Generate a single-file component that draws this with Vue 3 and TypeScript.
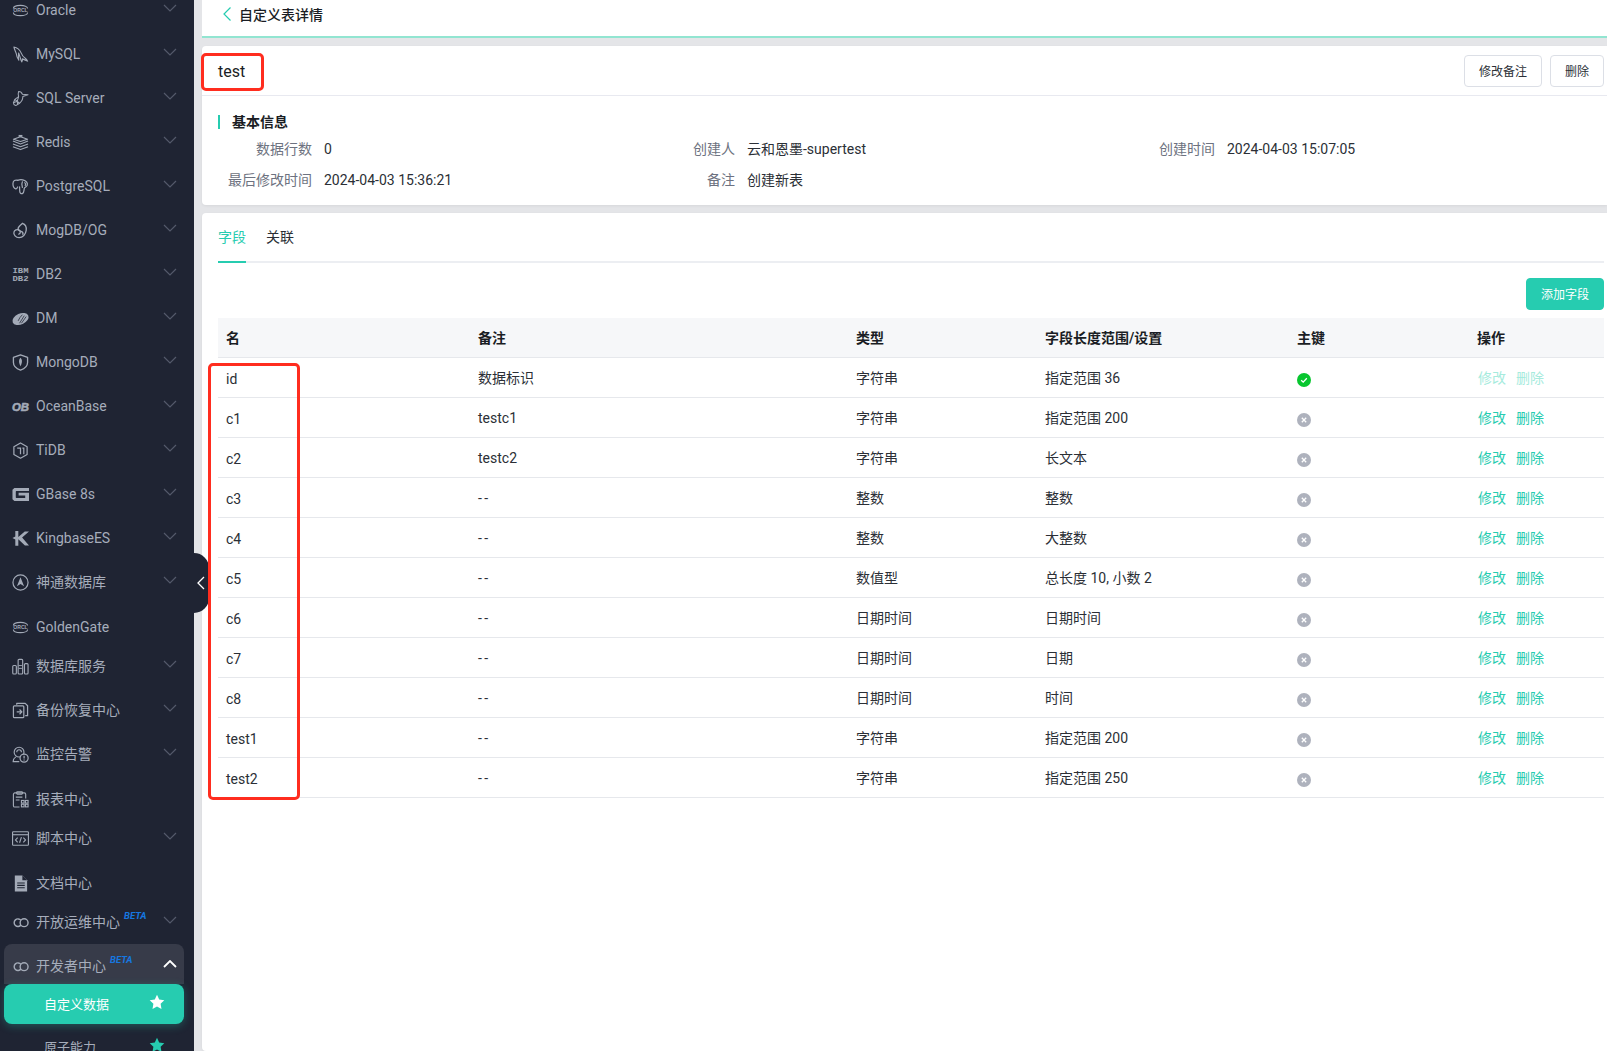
<template>
  <div class="shell">
    <aside class="sidebar">
      <ul class="menu">
        <li
          v-for="item in menu"
          :key="item.name"
          class="menu-item"
          :class="{ plain: !item.arrow, open: item.open }"
        >
          <svg class="menu-icon" viewBox="0 0 18 18" v-html="icons[item.icon]"></svg>
          <span class="menu-name">{{ item.name }}</span>
          <sup v-if="item.beta" class="beta">BETA</sup>
          <svg v-if="item.arrow" class="chevron" viewBox="0 0 14 8">
            <path :d="item.open ? 'M1 7l6-6 6 6' : 'M1 1l6 6 6-6'" />
          </svg>
        </li>
        <li class="sub-item active">
          <span>自定义数据</span>
          <svg class="star" viewBox="0 0 16 16"><path :d="starPath" /></svg>
        </li>
        <li class="sub-item">
          <span>原子能力</span>
          <svg class="star" viewBox="0 0 16 16"><path :d="starPath" /></svg>
        </li>
      </ul>
    </aside>

    <button class="collapse">
      <svg viewBox="0 0 10 16"><path d="M8 2L2 8l6 6" /></svg>
    </button>

    <main class="main">
      <header class="topbar">
        <svg class="back" viewBox="0 0 10 16"><path d="M8.500 1.500L2 8l6.500 6.500" /></svg>
        <span>自定义表详情</span>
      </header>

      <section class="card info-card">
        <div class="card-head">
          <h1>test</h1>
          <div class="head-actions">
            <button class="btn wide">修改备注</button>
            <button class="btn">删除</button>
          </div>
        </div>
        <div class="info-body">
          <h2>基本信息</h2>
          <div class="info-grid">
            <template v-for="f in infoFields" :key="f.label">
              <span class="info-label">{{ f.label }}</span>
              <span class="info-value">{{ f.value }}</span>
            </template>
          </div>
        </div>
      </section>

      <section class="card table-card">
        <div class="tabs">
          <span class="tab active">字段</span>
          <span class="tab">关联</span>
        </div>
        <div class="toolbar">
          <button class="btn primary">添加字段</button>
        </div>
        <table class="fields">
          <colgroup>
            <col class="c-name" /><col class="c-note" /><col class="c-type" />
            <col class="c-len" /><col class="c-key" /><col class="c-op" />
          </colgroup>
          <thead>
            <tr>
              <th>名</th><th>备注</th><th>类型</th><th>字段长度范围/设置</th><th>主键</th><th>操作</th>
            </tr>
          </thead>
          <tbody>
            <tr v-for="row in rows" :key="row.name">
              <td class="name-cell">{{ row.name }}</td>
              <td :class="{ latin: !row.key, empty: row.note === '--' }">{{ row.note }}</td>
              <td>{{ row.type }}</td>
              <td>{{ row.len }}</td>
              <td>
                <svg class="key-icon" viewBox="0 0 14 14">
                  <circle cx="7" cy="7" r="7" :fill="row.key ? '#07c62f' : '#aeb2bd'" />
                  <path v-if="row.key" d="M4.200 7.200l2 1.900 3.600-3.800" />
                  <path v-else d="M4.800 4.800l4.400 4.400M9.200 4.800L4.800 9.200" />
                </svg>
              </td>
              <td>
                <span class="ops" :class="{ disabled: row.key }"><a>修改</a><a>删除</a></span>
              </td>
            </tr>
          </tbody>
        </table>
      </section>

      <div class="mark mark-title"></div>
      <div class="mark mark-names"></div>
    </main>
  </div>
</template>

<script setup lang="ts">
interface MenuItem { name: string; icon: string; arrow?: boolean; beta?: boolean; open?: boolean }
interface FieldRow { name: string; note: string; type: string; len: string; key?: boolean }

const starPath = 'M8 .8l2.200 4.700 5.100.7-3.700 3.600.9 5.100L8 12.400l-4.500 2.500.9-5.100L.7 6.200l5.100-.7z'

const oracleIcon = `<g fill="none" stroke="currentColor" stroke-width="1.200"><path d="M1.500 7c0-4.500 15-4.500 15 0"/><path d="M1.500 11c0 4.500 15 4.500 15 0"/></g><text x="9" y="11" text-anchor="middle" font-size="5.400" font-weight="700" font-family="Liberation Sans, sans-serif" fill="currentColor">ORCL</text>`
const infinityIcon = `<g fill="none" stroke="currentColor" stroke-width="1.500"><path d="M9.500 6.800a4 4 0 1 0 0 4.800"/><circle cx="12.800" cy="9.200" r="4.200"/></g>`

const icons: Record<string, string> = {
  oracle: oracleIcon,
  mysql: `<g fill="none" stroke="currentColor" stroke-width="1.200" stroke-linejoin="round" stroke-linecap="round"><path d="M2 1c3 .5 6 2.500 7.500 6 1 2.500 2 4.500 4.500 6 1 .7 2 1.800 2.500 3-2-1-4-1.500-5.500-2.500.2 1 0 2-.7 3.300-.8-1.800-1.300-3.300-1.800-5.300-.5-1.500-1-3-1.500-4-.2 2.500-.2 5 .2 7.500-1.700-2-2.400-4.500-2.700-7C4 6 2.500 4 2 1z"/></g>`,
  sqlserver: `<g fill="none" stroke="currentColor" stroke-width="1.100" stroke-linejoin="round"><path d="M7 1.500c2 0 3.500 1.500 4 3l6 .5-5.500 2c0 3-1.500 5.500-3.500 7l-4 2.500c-1.500-.5-2.500-1.500-2.500-3L3 10l4-3c-.5-2 -.5-4 0-5.500z"/><path d="M3 10l5 4M7 7l-1.500 5-4 1.500M5.500 12l.5 3.500"/></g>`,
  redis: `<g fill="none" stroke="currentColor" stroke-width="1.200" stroke-linejoin="round"><path d="M1 7.500L9 10.500l8-3"/><path d="M1 10.500L9 13.500l8-3"/><path d="M1 13.500L9 16.500l8-3"/><path d="M1.500 5.500L9 3l7.500 2.500L9 8z"/></g><rect x="7" y="1" width="4" height="2" fill="currentColor"/>`,
  postgres: `<g fill="none" stroke="currentColor" stroke-width="1.300" stroke-linecap="round" stroke-linejoin="round"><path d="M6 2.500C3.500 1.500 1 3 1 6c0 2.500 1.500 5 3 5.500 1 .3 1.500-1 2-2"/><path d="M6 2.500c2-1 5-1 7 0 2.200.8 4 3 3 5.500-.8 1.500-2.500 1.500-3 3-.5 2 0 4.500-2 5.500-1.500.5-2.700-.5-2.800-2.500L8 9.500"/><path d="M11 4c-1 2-1 3.500 0 6"/><path d="M13.500 5c1 .5 1 2 .5 3"/></g>`,
  mogdb: `<g fill="none" stroke="currentColor" stroke-width="1.400" stroke-linecap="round"><path d="M11 1.500c3 1 4.500 4 4 7.500-.5 4-3.500 7.500-7.500 7.500C4 16.500 1.500 13.500 2 11c.4-2.500 3.500-3.500 5.500-2.500 2 1.200 1.500 4-.3 4.300"/><path d="M11 1.500C9 3 7 4.500 6.500 6.500c-.3 1.500 1 2.800 3 3.500 1.500.5 2.500 1.500 2 3"/></g>`,
  db2: `<g font-family="Liberation Mono, monospace" font-weight="700" fill="currentColor" text-anchor="middle"><text x="9" y="7.500" font-size="7" textLength="17" lengthAdjust="spacingAndGlyphs">IBM</text><text x="9" y="15.500" font-size="8" textLength="17" lengthAdjust="spacingAndGlyphs">DB2</text></g>`,
  dm: `<ellipse cx="9" cy="9.500" rx="9" ry="5.800" transform="rotate(-24 9 9.500)" fill="currentColor"/><g fill="none" stroke="#1f2433" stroke-width=".8"><path d="M8 14l5-8M10 14l5-7M6.500 11.500c1-2.500 2.500-4.500 4.500-6.500"/></g>`,
  mongodb: `<path d="M9 1l7.500 2.700v5.300c0 3.500-3.200 6.500-7.500 8-4.300-1.500-7.500-4.500-7.500-8V3.700z" fill="none" stroke="currentColor" stroke-width="1.400" stroke-linejoin="round"/><path d="M9 4c1.800 1.800 2.300 4.500 0 9-2.300-4.500-1.800-7.200 0-9z" fill="currentColor"/>`,
  oceanbase: `<text x="9" y="13.500" text-anchor="middle" font-size="12" font-weight="700" font-style="italic" font-family="Liberation Sans, sans-serif" fill="currentColor" stroke="currentColor" stroke-width=".6">OB</text>`,
  tidb: `<path d="M9 1l7 4v8.200l-7 4-7-4V5z" fill="none" stroke="currentColor" stroke-width="1.300" stroke-linejoin="round"/><path d="M5.500 6.500H9v6.500M11 6.500h1.500V13" fill="none" stroke="currentColor" stroke-width="1.300"/>`,
  gbase: `<path d="M2.500 2H18v3.200H4.500l-.5.500v6.600l.5.500H14v-2.800H7V7.200h11V16H2.500L.5 14V4z" fill="currentColor"/>`,
  kingbase: `<path d="M3.500 1h3.200v6.300L13.500 1.500H18L10.700 8 18 16.500h-4.300L6.700 9.800v7H3.500V10L.5 8.500l3-1.500z" fill="currentColor"/>`,
  shentong: `<circle cx="9" cy="9" r="8" fill="none" stroke="currentColor" stroke-width="1.300"/><path d="M9 3.500l3.800 9.500L9 10.500 5.200 13z" fill="currentColor"/>`,
  service: `<g fill="none" stroke="currentColor" stroke-width="1.200"><rect x=".8" y="8" width="3.800" height="9" rx="1"/><rect x="6.500" y="1.500" width="4.800" height="15.500" rx="1"/><rect x="13.200" y="6" width="3.800" height="11" rx="1"/></g><path d="M7 8h3.500M7 11h3.500" stroke="currentColor"/>`,
  backup: `<g fill="none" stroke="currentColor" stroke-width="1.300" stroke-linejoin="round"><path d="M5 3V1.500h9l2.500 2.500v10.500H14"/><rect x="1.500" y="4" width="11" height="12.500" rx="1"/><path d="M5 10.500h5M8 8l2.500 2.500L8 13"/></g>`,
  monitor: `<g fill="none" stroke="currentColor" stroke-width="1.200"><circle cx="7.500" cy="6.500" r="5.200"/><path d="M4 11.500c-1.500 1-2.800 2.500-2.800 5h6.500"/><path d="M5 6.500a2.500 2.500 0 0 1 5 0"/></g><circle cx="12.800" cy="12.800" r="4.300" fill="#1f2433" stroke="currentColor" stroke-width="1.300"/><path d="M12.800 10.300v3M12.800 14.300v1" stroke="currentColor" stroke-width="1.300"/>`,
  report: `<g fill="none" stroke="currentColor" stroke-width="1.200"><path d="M8 17H3a1.500 1.500 0 0 1-1.500-1.500V3.500A1.500 1.500 0 0 1 3 2h10a1.500 1.500 0 0 1 1.500 1.500V8"/><rect x="5" y=".8" width="6" height="2.500" rx=".6"/><path d="M4 6.500h7M4 9.500h4"/><rect x="10" y="10" width="2.800" height="2.800"/><rect x="14.200" y="10" width="2.800" height="2.800"/><rect x="10" y="14" width="2.800" height="2.800"/><rect x="14.200" y="14" width="2.800" height="2.800"/></g>`,
  script: `<g fill="none" stroke="currentColor" stroke-width="1.200"><rect x=".6" y="1.800" width="16.800" height="14.400" rx=".8"/><path d="M.6 5h16.800"/><path d="M6 8l-2.300 2.500L6 13M12 8l2.300 2.500L12 13M10 7.500L8 13.500"/></g>`,
  doc: `<path d="M3 .5h8l5 5v12H3z" fill="currentColor"/><path d="M11 .5v5h5" fill="#1f2433"/><path d="M5.500 8.500h8M5.500 11h8M5.500 13.500h8" stroke="#1f2433" stroke-width="1.100"/>`,
  infinity: infinityIcon,
}

const menu: MenuItem[] = [
  { name: 'Oracle', icon: 'oracle', arrow: true },
  { name: 'MySQL', icon: 'mysql', arrow: true },
  { name: 'SQL Server', icon: 'sqlserver', arrow: true },
  { name: 'Redis', icon: 'redis', arrow: true },
  { name: 'PostgreSQL', icon: 'postgres', arrow: true },
  { name: 'MogDB/OG', icon: 'mogdb', arrow: true },
  { name: 'DB2', icon: 'db2', arrow: true },
  { name: 'DM', icon: 'dm', arrow: true },
  { name: 'MongoDB', icon: 'mongodb', arrow: true },
  { name: 'OceanBase', icon: 'oceanbase', arrow: true },
  { name: 'TiDB', icon: 'tidb', arrow: true },
  { name: 'GBase 8s', icon: 'gbase', arrow: true },
  { name: 'KingbaseES', icon: 'kingbase', arrow: true },
  { name: '神通数据库', icon: 'shentong', arrow: true },
  { name: 'GoldenGate', icon: 'oracle' },
  { name: '数据库服务', icon: 'service', arrow: true },
  { name: '备份恢复中心', icon: 'backup', arrow: true },
  { name: '监控告警', icon: 'monitor', arrow: true },
  { name: '报表中心', icon: 'report' },
  { name: '脚本中心', icon: 'script', arrow: true },
  { name: '文档中心', icon: 'doc' },
  { name: '开放运维中心', icon: 'infinity', arrow: true, beta: true },
  { name: '开发者中心', icon: 'infinity', arrow: true, beta: true, open: true },
]

const infoFields = [
  { label: '数据行数', value: '0' },
  { label: '创建人', value: '云和恩墨-supertest' },
  { label: '创建时间', value: '2024-04-03 15:07:05' },
  { label: '最后修改时间', value: '2024-04-03 15:36:21' },
  { label: '备注', value: '创建新表' },
]

const rows: FieldRow[] = [
  { name: 'id', note: '数据标识', type: '字符串', len: '指定范围 36', key: true },
  { name: 'c1', note: 'testc1', type: '字符串', len: '指定范围 200' },
  { name: 'c2', note: 'testc2', type: '字符串', len: '长文本' },
  { name: 'c3', note: '--', type: '整数', len: '整数' },
  { name: 'c4', note: '--', type: '整数', len: '大整数' },
  { name: 'c5', note: '--', type: '数值型', len: '总长度 10, 小数 2' },
  { name: 'c6', note: '--', type: '日期时间', len: '日期时间' },
  { name: 'c7', note: '--', type: '日期时间', len: '日期' },
  { name: 'c8', note: '--', type: '日期时间', len: '时间' },
  { name: 'test1', note: '--', type: '字符串', len: '指定范围 200' },
  { name: 'test2', note: '--', type: '字符串', len: '指定范围 250' },
]
</script>

<style>
html, body { margin: 0; height: 100%; overflow: hidden; }
</style>

<style scoped>
* { box-sizing: border-box; }

.shell {
  display: flex; height: 1051px; overflow: hidden; position: relative;
  font-family: Roboto, 'Noto Sans CJK SC', sans-serif; font-size: 14px; color: #1f2329;
  background: #e4e5e8;
}

.sidebar { width: 194px; flex-shrink: 0; background: #1f2433; overflow: hidden; }
.menu { list-style: none; margin: -10px 0 0; padding: 0 10px 0 4px; }
.menu-item {
  display: flex; align-items: center; height: 40px; margin-bottom: 4px;
  padding-left: 8px; color: #a6adbb; border-radius: 8px 8px 0 0; white-space: nowrap;
}
.menu-item.plain { margin-bottom: 0; padding-top: 2px; }
.menu-item.open { background: #373b49; margin: -2px 0 0; padding-top: 4px; height: 40px; }
.menu-icon { width: 17px; height: 17px; flex-shrink: 0; margin-right: 7px; color: #a3aab7; overflow: visible; }
.menu-name { line-height: 20px; }
.beta {
  align-self: flex-start; margin: 9px 0 0 4px; font-size: 9.5px; line-height: 10px; font-weight: 700;
  font-style: italic; color: #1677e0;
}
.open .beta { margin-top: 7px; }
.chevron {
  width: 14px; height: 8px; margin-left: auto; margin-right: 7px; margin-bottom: 5px;
  fill: none; stroke: #545a6b; stroke-width: 1.2;
}
.open .chevron { stroke: #fff; stroke-width: 1.8; margin-bottom: 4px; }

.sub-item {
  display: flex; align-items: center; height: 40px; margin-bottom: 3px; padding: 0 19px 2px 40px;
  font-size: 13px; color: #a6adbb; border-radius: 8px;
}
.sub-item span { flex: 1; }
.sub-item.active { background: #26ccb0; color: #fff; box-shadow: 0 2px 8px rgba(38, 204, 176, .3); }
.star { width: 16px; height: 16px; fill: #26ccb0; margin-bottom: 2px; }
.active .star { fill: #fff; }

.collapse {
  position: absolute; left: 194px; top: 553px; width: 15px; height: 60px; padding: 0;
  border: 0; border-radius: 0 15px 15px 0; background: #1f2433; display: flex; align-items: center;
}
.collapse svg { width: 10px; height: 16px; margin-left: 2px; fill: none; stroke: #fff; stroke-width: 1.3; }

.main { flex: 1; min-width: 0; padding-left: 8px; display: flex; flex-direction: column; }
.topbar {
  display: flex; align-items: center; height: 38px; flex-shrink: 0; padding: 0 0 8px 20px;
  background: #fff; border-bottom: 2px solid #92e5d1; font-weight: 500; color: #1a1d24;
}
.back { width: 10px; height: 16px; margin-right: 7px; fill: none; stroke: #26ccb0; stroke-width: 1.2; }

.card { background: #fff; border-radius: 4px 0 0 4px; margin-top: 8px; box-shadow: 0 1px 3px rgba(0, 0, 0, .06); }
.info-card { height: 159px; flex-shrink: 0; }
.card-head {
  display: flex; align-items: center; justify-content: space-between; height: 50px;
  padding: 0 3px 0 16px; border-bottom: 1px solid #e8e9f0;
}
.card-head h1 { margin: 0; padding-top: 2px; font-size: 16px; font-weight: 400; color: #1a1d24; }
.head-actions { display: flex; gap: 8px; padding-top: 1px; }
.btn {
  height: 32px; width: 54px; padding: 0 0 2px; font: inherit; font-size: 12px; color: #2b2f36; background: #fff;
  border: 1px solid #dcdfe6; border-radius: 4px;
}
.btn.wide { width: 78px; }
.btn.primary { width: 78px; background: #26ccb0; border-color: #26ccb0; color: #fff; }

.info-body { padding: 19px 0 0 16px; }
.info-body h2 {
  margin: 0 0 10px; height: 14px; line-height: 14px; padding-left: 12px; font-size: 14px; font-weight: 600;
  color: #1a1d24; border-left: 2px solid #26ccb0;
}
.info-grid {
  display: grid; grid-template-columns: 94px 320px 103px 370px 110px 1fr; row-gap: 11px; line-height: 20px;
}
.info-label { text-align: right; color: #6d7280; }
.info-value { padding-left: 12px; color: #2b2f36; }

.table-card { flex: 1; padding: 0 3px 0 16px; min-height: 0; }
.tabs { display: flex; gap: 20px; height: 50px; border-bottom: 2px solid #eceef2; }
.tab { line-height: 48px; height: 50px; color: #2b2f36; }
.tab.active { color: #26ccb0; border-bottom: 2px solid #26ccb0; }
.toolbar { display: flex; justify-content: flex-end; padding-top: 15px; height: 55px; }

.fields { width: 100%; border-collapse: collapse; table-layout: fixed; }
.c-name { width: 252px; } .c-note { width: 378px; } .c-type { width: 189px; }
.c-len { width: 252px; } .c-key { width: 180px; } .c-op { width: 135px; }
.fields th {
  height: 39px; padding: 0 8px; text-align: left; font-weight: 600; color: #1a1d24; background: #f6f7f9;
  border-bottom: 1px solid #e6e8ec;
}
.fields td { height: 40px; padding: 0 8px; color: #2b2f36; border-bottom: 1px solid #e6e8ec; }
.fields td.name-cell { padding-top: 3px; }
.fields td.latin { padding-top: 2px; }
.fields td.empty { letter-spacing: 2.5px; }
.key-icon { display: block; width: 14px; height: 14px; margin-top: 5px; }
.key-icon path { fill: none; stroke: #fff; stroke-width: 1.3; }
.ops { display: flex; gap: 10px; margin-left: 1px; color: #26ccb0; }
.ops.disabled { color: #a6ebdd; }

.mark { position: absolute; border: 3px solid #ff2d1f; border-radius: 5px; pointer-events: none; }
.mark-title { left: 201px; top: 53px; width: 63px; height: 38px; }
.mark-names { left: 208px; top: 363px; width: 92px; height: 437px; }
</style>
